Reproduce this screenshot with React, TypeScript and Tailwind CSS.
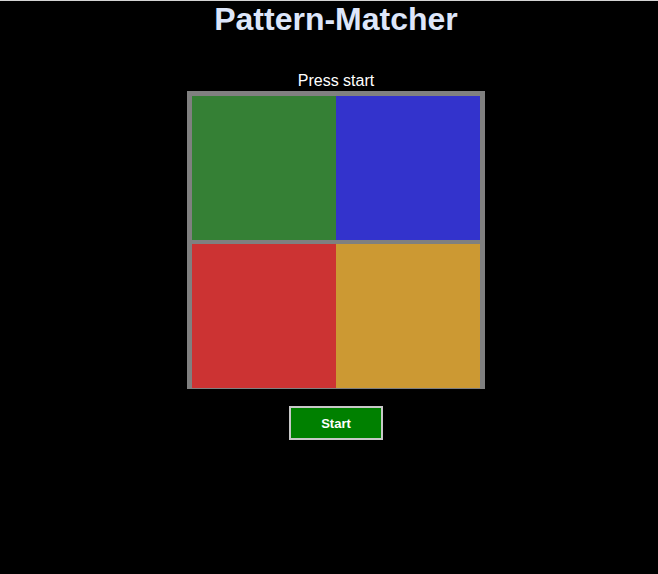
export default function App() {
  const tiles = [
    ["bg-[#358035]", "bg-[#3333cc]"],
    ["bg-[#cc3333]", "bg-[#cc9933]"],
  ];

  return (
    <div className="min-h-[574px] w-full bg-black border-t border-[#d4d4d4] font-['Liberation_Sans',Arial,sans-serif] text-white">
      <div className="flex flex-col items-center pl-[14px]">
        <h1 className="text-[32px] font-bold leading-[36px] text-[#dde6fa]">Pattern-Matcher</h1>

        <p className="mt-[35px] text-[16px] leading-[18px]">Press start</p>

        {/* board */}
        <div className="mt-px w-[298px] h-[298px] bg-[#808080] pt-[5px] px-[5px] pb-px flex flex-col gap-[4px]">
          {tiles.map((row, i) => (
            <div key={i} className="flex">
              {row.map((c) => (
                <div key={c} className={`w-[144px] h-[144px] ${c}`} />
              ))}
            </div>
          ))}
        </div>

        <button className="mt-[17px] w-[94px] h-[34px] bg-[#008000] border-2 border-[#c8c8c8] pt-px text-[13px] font-bold text-white">
          Start
        </button>
      </div>
    </div>
  );
}
